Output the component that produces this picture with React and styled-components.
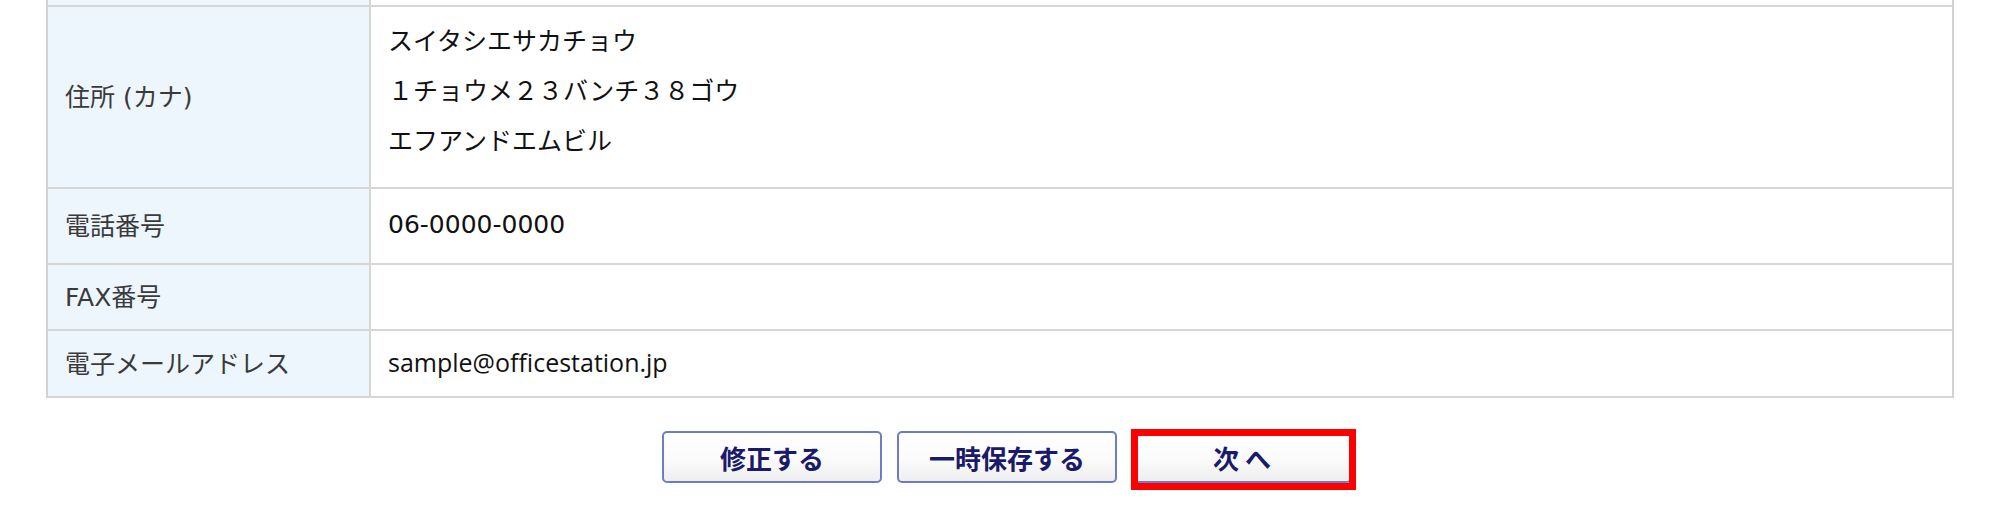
import React from "react";
import styled, { createGlobalStyle } from "styled-components";

const Global = createGlobalStyle`
  html, body { margin: 0; padding: 0; background: #ffffff; }
  body { font-family: "DejaVu Sans", "Noto Sans CJK JP", sans-serif; }
`;

const Page = styled.div`
  width: 2000px;
  height: 531px;
  overflow: hidden;
  box-sizing: border-box;
  padding: 0 46px;
`;

const Table = styled.div`
  display: flex;
  flex-direction: column;
  border-left: 2px solid #d2d2d2;
  border-right: 2px solid #d2d2d2;
`;

const Row = styled.div`
  display: grid;
  grid-template-columns: 323px 1fr;
  height: ${(p) => p.$h}px;
  border-bottom: 2px solid #d6d6d6;
`;

const Label = styled.div`
  background: #edf5fd;
  border-right: 2px solid #d6d6d6;
  display: flex;
  align-items: center;
  box-sizing: border-box;
  padding-left: 17px;
  padding-bottom: 4px;
  font-size: 25px;
  color: #3a3a3a;
  white-space: nowrap;
`;

const Value = styled.div`
  display: flex;
  flex-direction: column;
  box-sizing: border-box;
  justify-content: ${(p) => (p.$top ? "flex-start" : "center")};
  padding-left: 17px;
  padding-top: ${(p) => (p.$top ? "10px" : "0")};
  padding-bottom: ${(p) => (p.$top ? "0" : "4px")};
  font-family: ${(p) =>
    p.$narrow
      ? `"Open Sans", "Noto Sans CJK JP", sans-serif`
      : `"DejaVu Sans", "Noto Sans CJK JP", sans-serif`};
  font-size: 25px;
  color: #111111;
  white-space: nowrap;
`;

const Line = styled.div`
  line-height: 50px;
  height: 50px;
`;

const Buttons = styled.div`
  display: flex;
  justify-content: center;
  gap: 15px;
  margin-top: 33px;
  padding-left: 14px;
`;

const Button = styled.button`
  position: relative;
  width: 220px;
  height: 52px;
  box-sizing: border-box;
  border: 2px solid #6c7dc7;
  border-radius: 5px;
  background: linear-gradient(#ffffff 0%, #fbfbfb 55%, #eeeeee 100%);
  font-family: "Noto Sans CJK JP", sans-serif;
  font-weight: 700;
  font-size: 26px;
  color: #1a1a6a;
  padding: 0;
  cursor: pointer;
  ${(p) =>
    p.$marked &&
    `
    &::after {
      content: "";
      position: absolute;
      top: -4px;
      left: -3px;
      right: -6px;
      bottom: -9px;
      border: 7px solid #ff0000;
      pointer-events: none;
    }
  `}
`;

const rows = [
  { label: "電話番号", value: "06-0000-0000", h: 74 },
  { label: "FAX番号", value: "", h: 64 },
  { label: "電子メールアドレス", value: "sample@officestation.jp", h: 65, narrow: true },
];

export default function App() {
  return (
    <>
      <Global />
      <Page>
        <Table>
          <Row $h={5}>
            <Label />
            <Value />
          </Row>
          <Row $h={180}>
            <Label>住所 (カナ)</Label>
            <Value $top>
              <Line>スイタシエサカチョウ</Line>
              <Line>１チョウメ２３バンチ３８ゴウ</Line>
              <Line>エフアンドエムビル</Line>
            </Value>
          </Row>
          {rows.map((r) => (
            <Row key={r.label} $h={r.h}>
              <Label>{r.label}</Label>
              <Value $narrow={r.narrow}>{r.value}</Value>
            </Row>
          ))}
        </Table>
        <Buttons>
          <Button>修正する</Button>
          <Button>一時保存する</Button>
          <Button $marked>次 へ</Button>
        </Buttons>
      </Page>
    </>
  );
}
